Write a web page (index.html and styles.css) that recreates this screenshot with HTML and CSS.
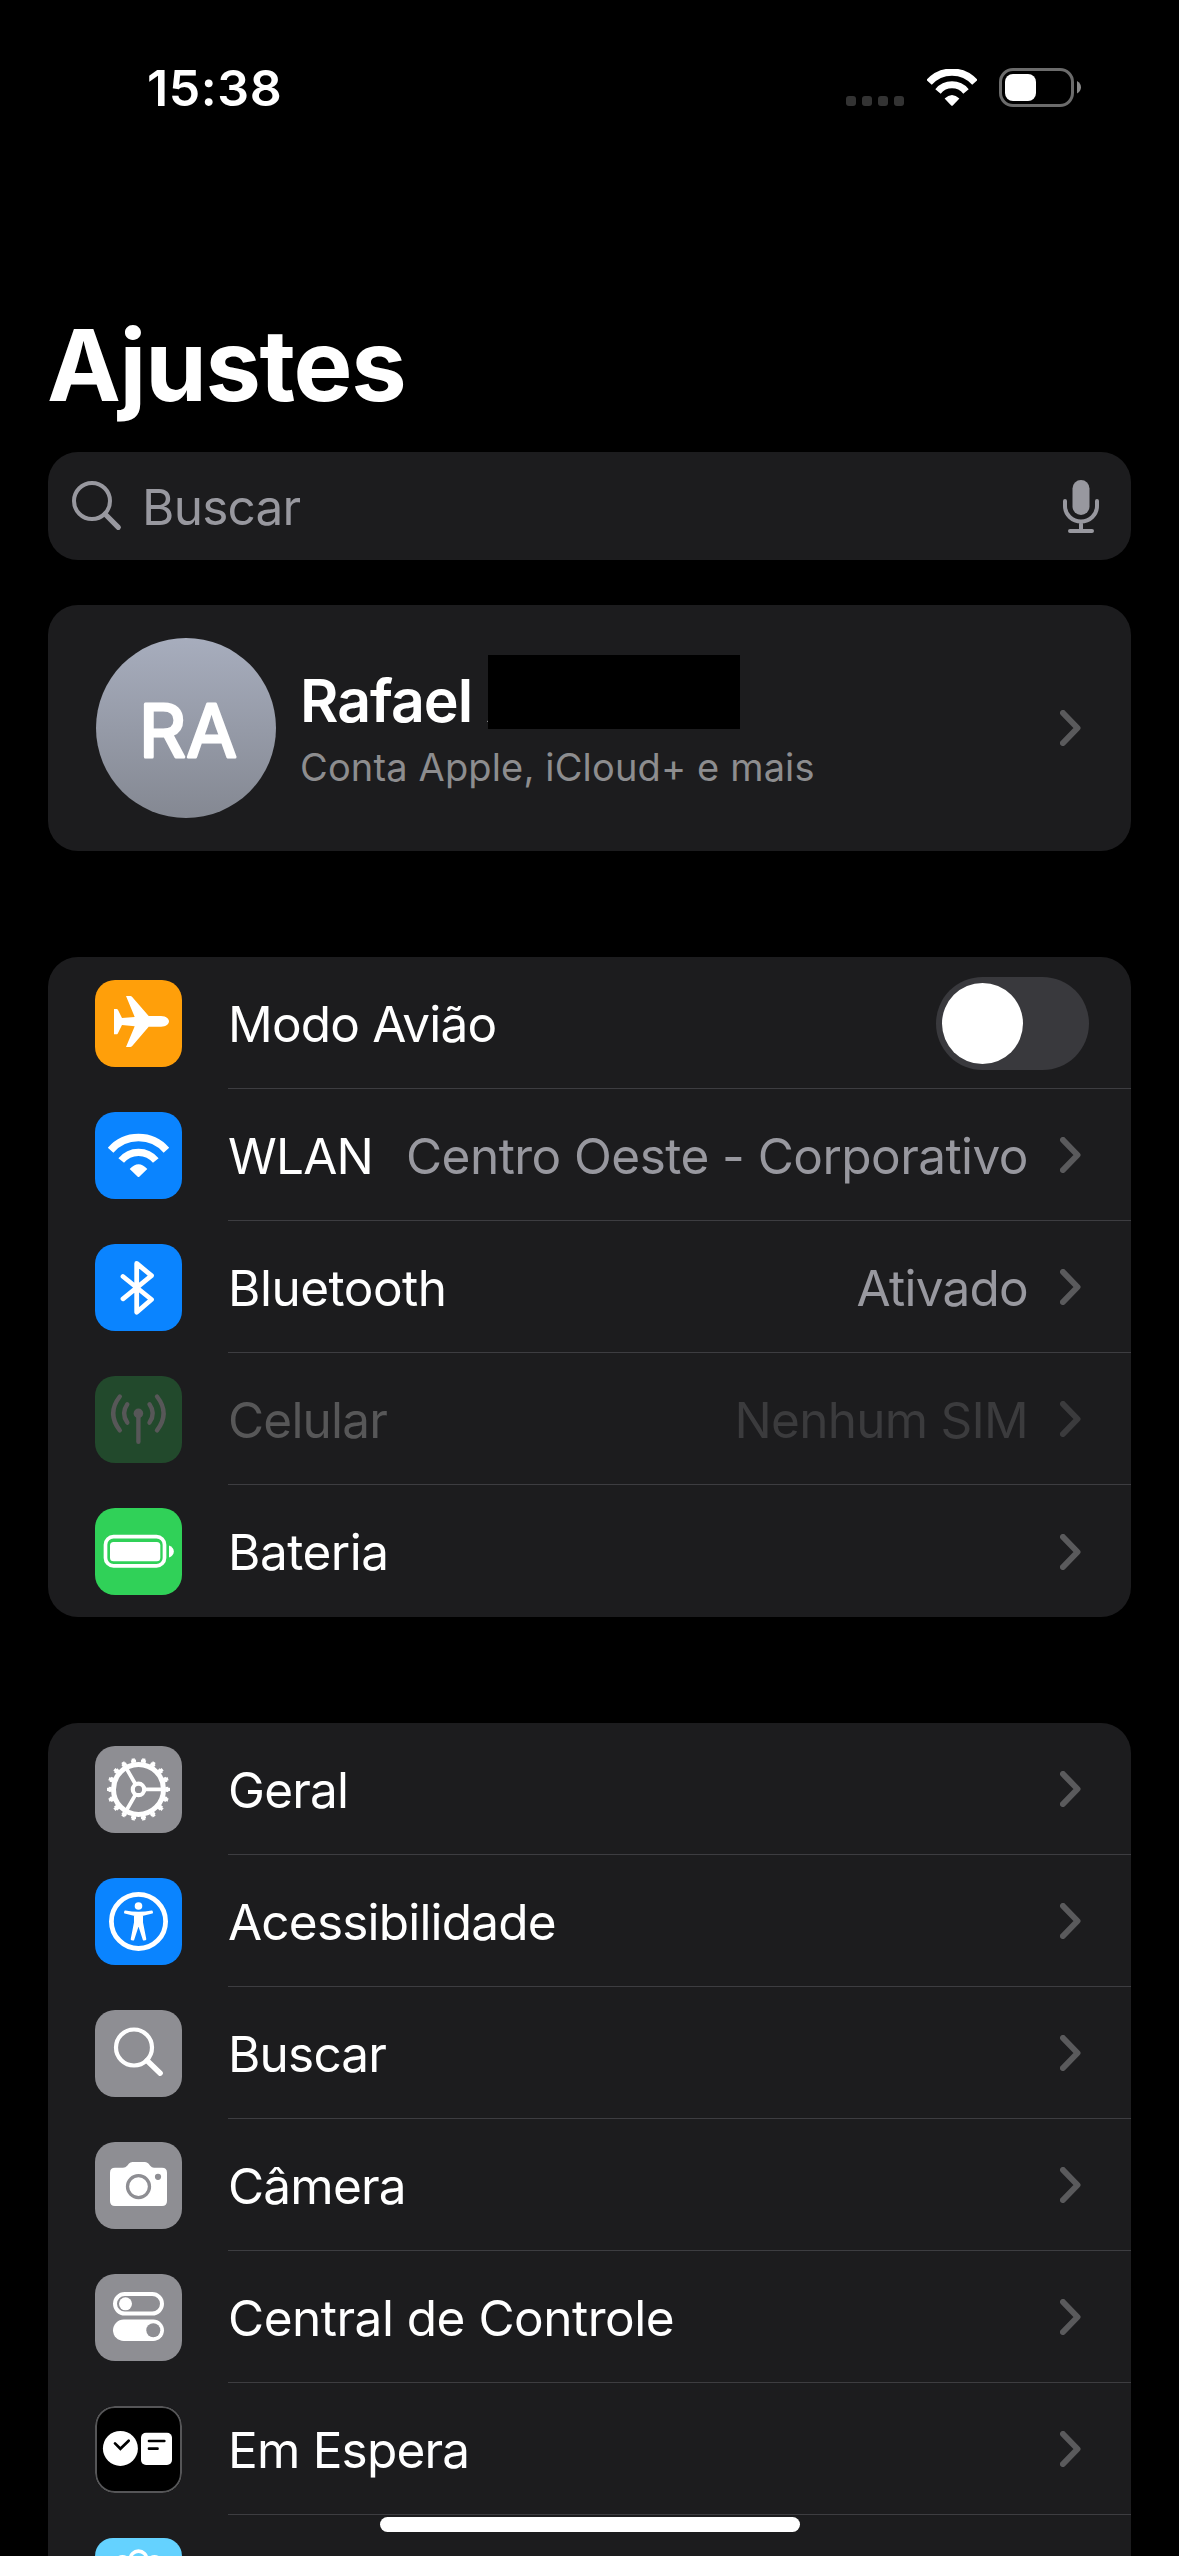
FILE: index.html
```html
<!DOCTYPE html>
<html lang="pt-BR">
<head>
  <meta charset="UTF-8">
  <title>Ajustes</title>
  <link rel="stylesheet" href="styles.css">
</head>
<body>
  <!-- shared chevron -->
  <svg class="defs" width="0" height="0">
    <symbol id="chevron" viewBox="0 0 21 36">
      <path d="M3 3 L17.5 18 L3 33" fill="none" stroke="currentColor" stroke-width="6" stroke-linecap="round" stroke-linejoin="round"/>
    </symbol>
  </svg>

  <div class="status-bar">
    <span class="time">15:38</span>
    <div class="status-icons">
      <div class="dots"><i></i><i></i><i></i><i></i></div>
      <svg class="status-wifi" width="50" height="37" viewBox="0 0 50 37">
        <g fill="none" stroke="#fff">
          <path d="M2.1 13.4 A30.6 30.6 0 0 1 47.9 13.4" stroke-width="7.2"/>
          <path d="M11 22.4 A18.2 18.2 0 0 1 39 22.4" stroke-width="7"/>
        </g>
        <path d="M17.6 29.6 Q25 22.4 32.4 29.6 L25.8 36.4 Q25 37.2 24.2 36.4 Z" fill="#fff"/>
      </svg>
      <svg class="status-battery" width="83" height="39" viewBox="0 0 83 39">
        <rect x="1.5" y="1.5" width="72" height="36" rx="12.5" fill="none" stroke="#6b6b6b" stroke-width="3"/>
        <rect x="6" y="6" width="31" height="27" rx="8" fill="#fff"/>
        <path d="M78 13 Q82 15.5 82 19.3 Q82 23 78 25.5 Z" fill="#8a8a8a"/>
      </svg>
    </div>
  </div>

  <h1>Ajustes</h1>

  <div class="search">
    <svg width="50" height="50" viewBox="0 0 50 50">
      <circle cx="20" cy="20" r="18" fill="none" stroke="#98989f" stroke-width="4"/>
      <path d="M33 33 L46.3 46.3" stroke="#98989f" stroke-width="5.2" stroke-linecap="round"/>
    </svg>
    <span class="placeholder">Buscar</span>
    <svg class="mic" width="36" height="53" viewBox="0 0 36 53">
      <rect x="9.5" y="0" width="17" height="35" rx="8.5" fill="#98989f"/>
      <path d="M2 21 V26 A16 15.5 0 0 0 34 26 V21 M18 42 V50 M7 51 H29" fill="none" stroke="#98989f" stroke-width="4" stroke-linecap="round"/>
    </svg>
  </div>

  <div class="card profile">
    <svg class="avatar" width="180" height="180" viewBox="0 0 180 180">
      <defs>
        <linearGradient id="avatarBg" x1="0" y1="0" x2="0" y2="1">
          <stop offset="0" stop-color="#a7adbd"/>
          <stop offset="1" stop-color="#848892"/>
        </linearGradient>
      </defs>
      <circle cx="90" cy="90" r="90" fill="url(#avatarBg)"/>
      <text class="initials" x="43" y="118.5">R</text>
      <text class="initials" x="90.5" y="118.5">A</text>
    </svg>
    <div class="profile-text">
      <div class="name">Rafael A<span class="cover"></span></div>
      <div class="sub">Conta Apple, iCloud+ e mais</div>
    </div>
    <svg class="chevron" width="21" height="36"><use href="#chevron"/></svg>
  </div>

  <div class="card">
    <div class="row">
      <svg class="icon orange" viewBox="0 0 87 87">
        <path fill="#fff" d="M53.7 36 H66 C71 36 74 38.8 74 41.3 C74 44 71 46.7 66 46.7 H53.7 L37.2 66 Q36.3 67 35.2 67 H31 L39.7 46.3 L27 44.9 L22.8 53.4 Q22.3 54.3 21.4 54.3 H19 V29 H21.6 Q22.4 29 22.9 29.8 L27 38 L39.7 37 L31 16 H35.4 Q36.4 16 37.2 17 Z"/>
      </svg>
      <div class="cell">
        <span class="label">Modo Avião</span>
        <span class="toggle"></span>
      </div>
    </div>
    <div class="row">
      <svg class="icon blue" viewBox="0 0 87 87">
        <g fill="none" stroke="#fff">
          <path d="M15.6 38.2 A37 37 0 0 1 71.4 38.2" stroke-width="7.4"/>
          <path d="M26.2 48.6 A22.2 22.2 0 0 1 60.8 48.6" stroke-width="7.2"/>
        </g>
        <path fill="#fff" d="M34.7 57 Q43.5 47.4 52.3 57 L44.5 64.5 Q43.5 65.5 42.5 64.5 Z"/>
      </svg>
      <div class="cell">
        <span class="label">WLAN</span>
        <span class="value">Centro Oeste - Corporativo</span>
        <svg class="chevron" width="21" height="36"><use href="#chevron"/></svg>
      </div>
    </div>
    <div class="row">
      <svg class="icon blue" viewBox="0 0 87 87">
        <path fill="none" stroke="#fff" stroke-width="4.8" stroke-linecap="round" stroke-linejoin="round" d="M28 32.5 L56.5 55.5 L41.7 68.3 V19.4 L56.5 31.7 L28 54.8"/>
      </svg>
      <div class="cell">
        <span class="label wide">Bluetooth</span>
        <span class="value short">Ativado</span>
        <svg class="chevron" width="21" height="36"><use href="#chevron"/></svg>
      </div>
    </div>
    <div class="row disabled">
      <svg class="icon darkgreen" viewBox="0 0 87 87">
        <circle cx="43.4" cy="37.4" r="4.8" fill="#575758"/>
        <path fill="none" stroke="#575758" stroke-width="4.4" stroke-linecap="round" d="M43.4 40 V65.8 M32.3 28.3 Q25.8 37.4 32.3 46.6 M54.5 28.3 Q61 37.4 54.5 46.6 M24.8 20.5 Q11.6 37.4 24.8 54.3 M62 20.5 Q75.2 37.4 62 54.3"/>
      </svg>
      <div class="cell">
        <span class="label">Celular</span>
        <span class="value short">Nenhum SIM</span>
        <svg class="chevron" width="21" height="36"><use href="#chevron"/></svg>
      </div>
    </div>
    <div class="row">
      <svg class="icon green" viewBox="0 0 87 87">
        <rect x="10.5" y="28.7" width="59" height="29.2" rx="8" fill="none" stroke="#fff" stroke-width="3.7"/>
        <rect x="15" y="34" width="50.3" height="19.3" rx="3.5" fill="#fff"/>
        <path fill="#fff" d="M74 37.5 Q78.8 39.5 78.8 43.4 Q78.8 47.4 74 49.4 Z"/>
      </svg>
      <div class="cell">
        <span class="label wide">Bateria</span>
        <svg class="chevron" width="21" height="36"><use href="#chevron"/></svg>
      </div>
    </div>
  </div>

  <div class="card last">
    <div class="row">
      <svg class="icon gray" viewBox="0 0 87 87">
        <g fill="none" stroke="#fff">
          <circle cx="43.5" cy="43.4" r="25" stroke-width="5"/>
          <circle cx="43.5" cy="43.4" r="28.4" stroke-width="3" pathLength="360" stroke-dasharray="10 10" stroke-dashoffset="5"/>
          <circle cx="43.5" cy="43.4" r="30.3" stroke-width="2.4" pathLength="360" stroke-dasharray="6 14" stroke-dashoffset="3"/>
          <circle cx="43.5" cy="43.4" r="5.7" stroke-width="4.2"/>
          <path d="M50 43.4 H67 M40.2 37.7 L31.5 22.6 M40.2 49.1 L31.5 64.2" stroke-width="3.8"/>
        </g>
      </svg>
      <div class="cell">
        <span class="label">Geral</span>
        <svg class="chevron" width="21" height="36"><use href="#chevron"/></svg>
      </div>
    </div>
    <div class="row">
      <svg class="icon blue" viewBox="0 0 87 87">
        <circle cx="43.5" cy="43.4" r="27.1" fill="none" stroke="#fff" stroke-width="4.8"/>
        <circle cx="43.5" cy="28" r="3.8" fill="#fff"/>
        <path fill="#fff" stroke="#fff" stroke-width="2" stroke-linejoin="round" d="M30.2 33.6 Q43.5 36 56.8 33.6 L57 34.6 L47 37 V44.5 L50.3 61.2 L48.8 61.6 L44.2 47.5 H42.8 L38.2 61.6 L36.7 61.2 L40 44.5 V37 L30 34.6 Z"/>
      </svg>
      <div class="cell">
        <span class="label">Acessibilidade</span>
        <svg class="chevron" width="21" height="36"><use href="#chevron"/></svg>
      </div>
    </div>
    <div class="row">
      <svg class="icon gray" viewBox="0 0 87 87">
        <circle cx="39" cy="37.5" r="18" fill="none" stroke="#fff" stroke-width="4.2"/>
        <path d="M52 50.5 L65.2 63.2" stroke="#fff" stroke-width="5.4" stroke-linecap="round"/>
      </svg>
      <div class="cell">
        <span class="label">Buscar</span>
        <svg class="chevron" width="21" height="36"><use href="#chevron"/></svg>
      </div>
    </div>
    <div class="row">
      <svg class="icon gray" viewBox="0 0 87 87">
        <path fill="#fff" d="M20 25.7 H28 Q30.5 25.7 32.2 23.8 L34 21.6 Q35.3 20 37.5 20 H50 Q52 20 53.4 21.6 L55.2 23.8 Q56.8 25.7 59 25.7 H67 Q72 25.7 72 30.7 V59 Q72 64 67 64 H20 Q15 64 15 59 V30.7 Q15 25.7 20 25.7 Z"/>
        <circle cx="43.5" cy="44.6" r="11" fill="none" stroke="#8e8e93" stroke-width="3.3"/>
        <circle cx="63" cy="34.8" r="3.1" fill="#8e8e93"/>
      </svg>
      <div class="cell">
        <span class="label">Câmera</span>
        <svg class="chevron" width="21" height="36"><use href="#chevron"/></svg>
      </div>
    </div>
    <div class="row">
      <svg class="icon gray" viewBox="0 0 87 87">
        <rect x="20" y="20" width="47" height="19.6" rx="9.8" fill="none" stroke="#fff" stroke-width="4"/>
        <circle cx="30.5" cy="29.8" r="6.5" fill="#fff"/>
        <rect x="18" y="45.5" width="51" height="21.5" rx="10.75" fill="#fff"/>
        <circle cx="58.3" cy="56.3" r="7" fill="#8e8e93"/>
      </svg>
      <div class="cell">
        <span class="label wide">Central de Controle</span>
        <svg class="chevron" width="21" height="36"><use href="#chevron"/></svg>
      </div>
    </div>
    <div class="row">
      <svg class="icon black" viewBox="0 0 87 87">
        <rect x="1" y="1" width="85" height="85" rx="19" fill="none" stroke="#555557" stroke-width="2"/>
        <circle cx="25.4" cy="42.4" r="17.5" fill="#fff"/>
        <rect x="46" y="26.7" width="31" height="32.3" rx="5" fill="#fff"/>
        <path fill="none" stroke="#000" stroke-width="2.7" stroke-linecap="round" d="M20 37.4 L25.4 42.8 L33.7 34.7 M54 35 H69.3 M54 42.7 H62.5"/>
      </svg>
      <div class="cell">
        <span class="label">Em Espera</span>
        <svg class="chevron" width="21" height="36"><use href="#chevron"/></svg>
      </div>
    </div>
    <div class="row cut">
      <svg class="icon cyan" viewBox="0 0 87 18">
        <g fill="none" stroke="#fff" stroke-width="3.6">
          <circle cx="43.5" cy="21.3" r="8.2"/>
          <circle cx="27.5" cy="26.5" r="7.6"/>
          <circle cx="59.5" cy="26.5" r="7.6"/>
        </g>
      </svg>
    </div>
  </div>

  <div class="home-bar"></div>
</body>
</html>
```
FILE: styles.css
```css
* {
  box-sizing: border-box;
}

body {
  margin: 0;
  width: 1179px;
  height: 2556px;
  overflow: hidden;
  position: relative;
  padding: 0 48px;
  background-color: #000;
  color: #fff;
  font-family: Inter, "Liberation Sans", sans-serif;
}

.defs {
  display: block;
}

.status-bar {
  display: flex;
  justify-content: space-between;
  height: 310px;
  padding: 57px 49px 0 99px;
}

.time {
  font-size: 50px;
  font-weight: 600;
  line-height: 62px;
  letter-spacing: 0.6px;
}

.status-icons {
  display: flex;
  align-items: flex-end;
  height: 50px;
}

.dots {
  display: flex;
  gap: 6px;
  margin: 0 23px 1px 0;
}

.dots i {
  width: 10px;
  height: 10px;
  border-radius: 3px;
  background-color: #333;
}

.status-wifi {
  margin: 0 22px 1px 0;
}

h1 {
  margin: 0 0 0 -1px;
  height: 142px;
  font-size: 99px;
  font-weight: 700;
  line-height: 110px;
  letter-spacing: -1.3px;
}

.search {
  display: flex;
  align-items: center;
  height: 108px;
  margin-bottom: 45px;
  padding: 0 32px 0 24px;
  border-radius: 30px;
  background-color: #1c1c1e;
}

.placeholder {
  flex: 1;
  margin-left: 20px;
  padding-top: 1px;
  font-size: 49.5px;
  letter-spacing: -0.75px;
  color: #98989f;
}

.card {
  margin-bottom: 106px;
  border-radius: 30px;
  background-color: #1c1c1e;
  overflow: hidden;
}

.profile {
  display: flex;
  align-items: center;
  height: 246px;
  padding: 0 50px 0 48px;
}

.initials {
  font-size: 73px;
  font-weight: 400;
  fill: #fff;
  stroke: #fff;
  stroke-width: 3px;
  stroke-linejoin: round;
}

.profile-text {
  flex: 1;
  margin-left: 24px;
}

.name {
  position: relative;
  font-size: 59px;
  font-weight: 600;
  line-height: 72px;
  letter-spacing: -1px;
}

/* hides the surname */
.cover {
  position: absolute;
  left: 188px;
  top: -10px;
  width: 252px;
  height: 74px;
  background-color: #000;
}

.sub {
  margin-top: 5px;
  font-size: 38px;
  line-height: 50px;
  letter-spacing: 0.15px;
  color: #8d8d8f;
}

.row {
  display: flex;
  align-items: center;
  height: 132px;
  padding-left: 47px;
}

.icon {
  width: 87px;
  height: 87px;
  border-radius: 20px;
  margin-right: 46px;
}

.orange { background-color: #ff9f0a; }
.blue { background-color: #0a84ff; }
.green { background-color: #30d158; }
.darkgreen { background-color: #22492c; }
.gray { background-color: #8e8e93; }
.black { background-color: #000; }
.cyan { background-color: #64d2ff; }

.cell {
  flex: 1;
  display: flex;
  align-items: center;
  height: 132px;
  padding: 1px 50px 0 0;
  border-bottom: 1px solid #3d3d41;
}

.row:last-child .cell {
  border-bottom: none;
}

.label,
.value {
  padding-top: 1px;
  font-size: 49.5px;
  white-space: nowrap;
}

.label {
  letter-spacing: -0.8px;
}

.label.wide {
  letter-spacing: -0.5px;
}

.value {
  margin-left: auto;
  margin-right: 32px;
  color: #98989f;
  letter-spacing: -0.55px;
}

.value.short {
  letter-spacing: -0.75px;
}

.chevron {
  flex: none;
  color: #5a5a5c;
}

.label + .chevron {
  margin-left: auto;
}

.disabled .label {
  color: #575758;
}

.disabled .value,
.disabled .chevron {
  color: #3b3b3d;
}

.toggle {
  width: 153px;
  height: 93px;
  margin-left: auto;
  margin-right: -8px;
  padding: 6px;
  border-radius: 47px;
  background-color: #39393d;
}

.toggle::before {
  content: "";
  display: block;
  width: 81px;
  height: 81px;
  border-radius: 50%;
  background-color: #fff;
}

.last {
  margin-bottom: 0;
  border-radius: 30px 30px 0 0;
}

/* last row runs into the bottom of the screen */
.cut {
  height: 41px;
  align-items: flex-end;
}

.cut .icon {
  height: 18px;
  border-radius: 20px 20px 0 0;
}

.home-bar {
  position: absolute;
  left: 380px;
  top: 2517px;
  width: 420px;
  height: 15px;
  border-radius: 8px;
  background-color: #fff;
}
```
